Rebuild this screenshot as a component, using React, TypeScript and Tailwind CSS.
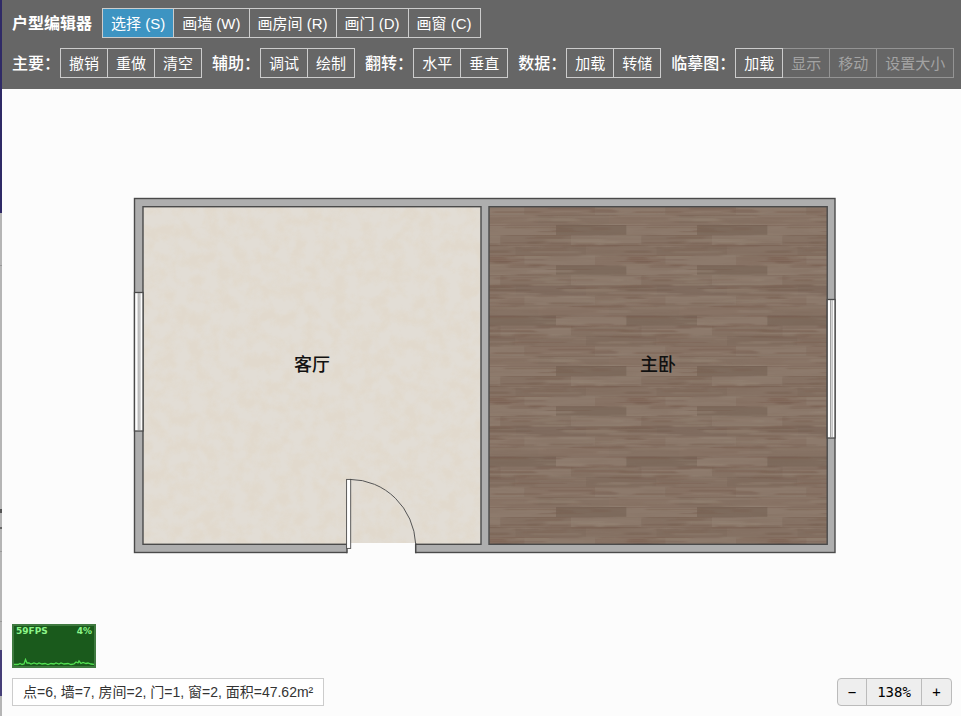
import React from "react";
import { clsx } from "clsx";

type ToolButton = { text: string; active?: boolean; disabled?: boolean };
type Group = { label: string; buttons: ToolButton[] };

const MODES: ToolButton[] = [
  { text: "选择 (S)", active: true },
  { text: "画墙 (W)" },
  { text: "画房间 (R)" },
  { text: "画门 (D)" },
  { text: "画窗 (C)" },
];

const GROUPS: Group[] = [
  { label: "主要：", buttons: [{ text: "撤销" }, { text: "重做" }, { text: "清空" }] },
  { label: "辅助：", buttons: [{ text: "调试" }, { text: "绘制" }] },
  { label: "翻转：", buttons: [{ text: "水平" }, { text: "垂直" }] },
  { label: "数据：", buttons: [{ text: "加载" }, { text: "转储" }] },
  {
    label: "临摹图：",
    buttons: [
      { text: "加载" },
      { text: "显示", disabled: true },
      { text: "移动", disabled: true },
      { text: "设置大小", disabled: true },
    ],
  },
];

function ButtonGroup({ label, buttons }: Group) {
  return (
    <div role="group" aria-label={label} className="flex">
      {buttons.map((b, i) => (
        <button
          key={b.text}
          type="button"
          disabled={b.disabled}
          aria-pressed={b.active}
          className={clsx(
            "h-[30px] border-y border-r px-2 pt-0.5 text-[15px] leading-6 whitespace-nowrap",
            i === 0 && "border-l",
            b.disabled ? "border-[#949494] text-[#a3a3a3]" : "border-[#cccccc] text-white",
            b.active && "bg-[#3d94c2]",
          )}
        >
          {b.text}
        </button>
      ))}
    </div>
  );
}

/* Wood floor: 14 rows of two planks, each row as [offset, first tone, second tone]. */
const DARK = "#7e6b5d";
const MID = "#867264";
const WARM = "#887365";
const LIGHT = "#8d7a6c";
const PLANKS: [number, string, string][] = [
  [0, DARK, LIGHT],
  [15, LIGHT, MID],
  [30, MID, "#826e60"],
  [39, WARM, LIGHT],
  [0, DARK, LIGHT],
  [15, LIGHT, MID],
  [30, "#836f61", "#806c5f"],
  [39, WARM, LIGHT],
  [53, MID, WARM],
  [0, LIGHT, DARK],
  [15, MID, LIGHT],
  [30, "#816d5f", MID],
  [39, LIGHT, WARM],
  [53, WARM, MID],
];
const TILE = 141;
const ROW = TILE / 14;

const STREAKS = (() => {
  let seed = 11;
  const rnd = () => {
    seed = (seed * 16807) % 2147483647;
    return seed / 2147483647;
  };
  const tones = ["#735a4c", "#978677", "#7a5f50", "#938374"];
  return Array.from({ length: 150 }, (_, i) => ({
    x: rnd() * TILE,
    y: rnd() * TILE,
    w: 16 + rnd() * 44,
    h: 1 + rnd() * 2,
    tone: tones[i % 4],
    o: 0.18 + rnd() * 0.26,
  }));
})();

function WoodTile() {
  const half = TILE / 2;
  return (
    <>
      <rect width={TILE} height={TILE} fill={MID} />
      {PLANKS.map(([off, a, b], r) => (
        <React.Fragment key={r}>
          <rect x={off - half} y={r * ROW} width={half} height={ROW} fill={b} />
          <rect x={off} y={r * ROW} width={half} height={ROW} fill={a} />
          <rect x={off + half} y={r * ROW} width={half} height={ROW} fill={b} />
          <rect x={off + TILE} y={r * ROW} width={half} height={ROW} fill={a} />
          <rect y={r * ROW} width={TILE} height="1" fill="#6d5143" opacity="0.25" />
        </React.Fragment>
      ))}
      <g filter="url(#soften)">
        {STREAKS.map((s, i) => (
          <g key={i} fill={s.tone} opacity={s.o}>
            <rect x={s.x} y={s.y} width={s.w} height={s.h} rx="1" />
            <rect x={s.x - TILE} y={s.y} width={s.w} height={s.h} rx="1" />
          </g>
        ))}
      </g>
    </>
  );
}

function FloorPlan() {
  return (
    <svg
      width="704"
      height="358"
      viewBox="0 0 704 358"
      role="img"
      aria-label="户型图"
      className="absolute top-[108px] left-[131px]"
    >
      <defs>
        <filter id="soften" colorInterpolationFilters="sRGB">
          <feGaussianBlur stdDeviation="2 0.3" />
        </filter>
        <pattern id="wood" x="423" y="28" width={TILE} height={TILE} patternUnits="userSpaceOnUse">
          <WoodTile />
        </pattern>
        <filter id="marble" x="0" y="0" width="100%" height="100%" colorInterpolationFilters="sRGB">
          <feTurbulence type="fractalNoise" baseFrequency="0.07" numOctaves="4" seed="5" />
          <feColorMatrix values="0 0 0 0 0.88  0 0 0 0 0.83  0 0 0 0 0.75  3 0 0 0 -1.1" />
        </filter>
        <filter id="grain" x="0" y="0" width="100%" height="100%" colorInterpolationFilters="sRGB">
          <feTurbulence type="fractalNoise" baseFrequency="0.02 0.3" numOctaves="3" seed="3" />
          <feColorMatrix values="0 0 0 0 0.46  0 0 0 0 0.37  0 0 0 0 0.31  2 0 0 0 -0.85" />
        </filter>
      </defs>
      <g>
        <rect x="1.5" y="1.5" width="700.5" height="354" fill="#aeaeae" stroke="#4a4a4a" strokeWidth="1.4" />
        <rect x="10" y="9.7" width="338" height="337.6" fill="#e2ddd5" />
        <rect x="10" y="9.7" width="338" height="337.6" filter="url(#marble)" opacity="0.36" />
        <rect x="10" y="9.7" width="338" height="337.6" fill="none" stroke="#4a4a4a" strokeWidth="1.4" />
        <rect x="356" y="9.7" width="338.2" height="337.6" fill="url(#wood)" />
        <rect x="356" y="9.7" width="338.2" height="337.6" filter="url(#grain)" opacity="0.2" />
        <rect x="356" y="9.7" width="338.2" height="337.6" fill="none" stroke="#4a4a4a" strokeWidth="1.4" />
      </g>
      {/* windows */}
      <g fill="#fdfdfd" stroke="#4a4a4a" strokeWidth="1.3">
        <rect x="1.5" y="95.5" width="8.5" height="138.5" />
        <rect x="694.2" y="102.5" width="7.8" height="138.5" />
        <path
          d="M5.2 96v137.5M6.9 96v137.5M697.5 103v137.5M699.1 103v137.5"
          stroke="#858585"
          strokeWidth="0.8"
        />
      </g>
      {/* door */}
      <rect x="214" y="346" width="68.5" height="11" fill="#fcfcfc" />
      <path d="M214 346.6v9.6M282.7 346.6v9.6" stroke="#4a4a4a" strokeWidth="1.5" />
      <path d="M217 282.4A66 68 0 0 1 282.7 347" fill="none" stroke="#555555" strokeWidth="1" />
      <rect x="213.6" y="282.4" width="4.1" height="69" fill="#ffffff" stroke="#4a4a4a" strokeWidth="0.9" />
      <g fontSize="18" fontWeight="500" fill="#111111" textAnchor="middle">
        <text x="179" y="174">客厅</text>
        <text x="525" y="174">主卧</text>
      </g>
    </svg>
  );
}

function FpsMeter() {
  return (
    <div className="flex h-11 w-[84px] flex-col justify-between border-2 border-[#3f7a40] bg-[#1a5a1c]">
      <div className="flex justify-between px-0.5 font-['DejaVu_Sans',sans-serif] text-[9px] leading-[10px] font-bold text-[#8cf58a]">
        <span>59FPS</span>
        <span>4%</span>
      </div>
      <svg width="80" height="8" viewBox="0 0 80 8" aria-hidden="true">
        <path
          d="M0 6.5h4l2-1 2 1 2-.5 1.5-4.5 1.5 3.5 2 0 2 1 3-1 3 1 2-1 3 1 3-.5 3 1 3-1 3 .5 2-1 3 1 2-1 3 1 4-.5 3 1 3-.5 2-2 2 1 1-2 2 2.5 2-1 3 1 2-.5 3 1 5 .5"
          fill="none"
          stroke="#53e052"
          strokeWidth="1.3"
        />
      </svg>
    </div>
  );
}

export default function App() {
  const zoomCell = "h-full w-[29px]";
  return (
    <div
      lang="zh-CN"
      className="flex min-h-screen bg-[#fcfcfc] font-['Liberation_Sans','Noto_Sans_CJK_SC',sans-serif]"
    >
      <div aria-hidden="true" className="flex w-0.5 shrink-0 flex-col bg-[#b5b5b5]">
        <div className="h-[213px] bg-[#2f2a66]" />
        <div className="h-[53px] border-b border-[#999999]" />
        <div className="flex h-[286px] flex-col justify-end gap-3.5 border-b border-[#999999] pb-[22px]">
          <div className="h-1 bg-[#555555]" />
          <div className="h-0.5 bg-[#666666]" />
        </div>
        <div className="h-[70px] border-b border-[#999999]" />
        <div className="h-7" />
        <div className="h-[46px] bg-[#463f78]" />
      </div>
      <div className="flex min-w-0 flex-1 flex-col">
        <header className="flex flex-col gap-2.5 bg-[#666666] px-2.5 pt-2 pb-[11px] text-white">
          <div className="flex items-center gap-2.5">
            <h1 className="pt-0.5 text-base leading-6 font-bold whitespace-nowrap">户型编辑器</h1>
            <ButtonGroup label="模式" buttons={MODES} />
          </div>
          <div className="flex items-center gap-2.5">
            {GROUPS.map((g) => (
              <div key={g.label} className="flex items-center">
                <span className="pt-0.5 text-base leading-6 font-medium whitespace-nowrap">{g.label}</span>
                <ButtonGroup {...g} />
              </div>
            ))}
          </div>
        </header>
        <main className="relative flex flex-1 flex-col justify-end overflow-hidden">
          <FloorPlan />
          <div className="relative flex items-end justify-between py-2.5 pr-[9px] pl-2.5">
            <div className="flex flex-col items-start gap-2.5">
              <FpsMeter />
              <p className="h-7 border border-[#cccccc] bg-white px-2.5 text-sm leading-[26px] text-[#333333]">
                点=6, 墙=7, 房间=2, 门=1, 窗=2, 面积=47.62m²
              </p>
            </div>
            <div
              role="group"
              aria-label="缩放"
              className="flex h-7 divide-x divide-[#bbbbbb] overflow-hidden rounded border border-[#bbbbbb] bg-[#eeeeee] font-['DejaVu_Sans_Mono',monospace] text-sm leading-[26px] text-black"
            >
              <button type="button" aria-label="缩小" className={zoomCell}>−</button>
              <button type="button" className="h-full w-[55px]">138%</button>
              <button type="button" aria-label="放大" className={zoomCell}>+</button>
            </div>
          </div>
        </main>
      </div>
    </div>
  );
}
